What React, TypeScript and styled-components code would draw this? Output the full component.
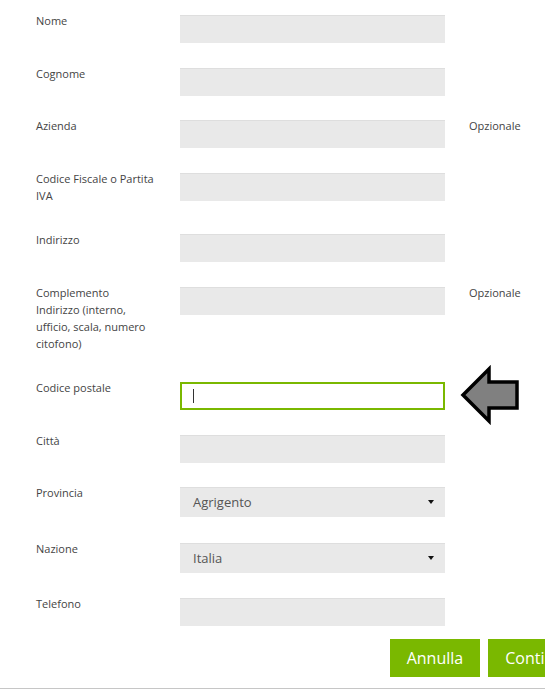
import React from 'react';
import styled, { createGlobalStyle } from 'styled-components';

const GlobalStyle = createGlobalStyle`
  html, body {
    margin: 0;
    padding: 0;
    background: #fff;
    overflow: hidden;
  }
  body {
    font-family: "Open Sans", "Liberation Sans", sans-serif;
  }
`;

const Page = styled.div`
  position: relative;
  width: 590px;
  padding: 12px 0 11px 36px;
  box-sizing: border-box;
  border-bottom: 1px solid #c6c6c6;
`;

const Fields = styled.div`
  display: flex;
  flex-direction: column;
  gap: 21.5px;
`;

const Row = styled.div`
  display: grid;
  grid-template-columns: 144px 265px auto;
  align-items: start;
`;

const Label = styled.div`
  font-size: 11px;
  line-height: 17px;
  color: #444;
  padding-bottom: 6px;
  padding-right: 24px;
  white-space: pre-line;
`;

const Hint = styled.div`
  font-size: 11px;
  line-height: 17px;
  color: #444;
  margin: 0 0 0 24px;
`;

const TextInput = styled.input`
  display: block;
  box-sizing: border-box;
  width: 265px;
  height: 28px;
  margin: 3px 0 0;
  padding: 0 12px;
  border: none;
  outline: none;
  background: #e9e9e9;
  box-shadow: inset 0 1px 0 #dedede;
  font: inherit;
`;

const FocusedInput = styled.div`
  box-sizing: border-box;
  width: 265px;
  height: 28px;
  margin-top: 3px;
  padding: 0 11px;
  border: 2px solid #7ab800;
  background: #fff;
  display: flex;
  align-items: center;
`;

const Caret = styled.span`
  display: block;
  width: 1px;
  height: 14px;
  background: #333;
`;

const Select = styled.div`
  box-sizing: border-box;
  width: 265px;
  height: 30px;
  margin: 3px 0 1px;
  padding: 0 11px 0 13px;
  background: #e9e9e9;
  box-shadow: inset 0 1px 0 #dedede;
  display: flex;
  align-items: center;
  justify-content: space-between;
  font-size: 13px;
  color: #555;
`;

const SelectArrow = styled.span`
  width: 0;
  height: 0;
  border-left: 3.5px solid transparent;
  border-right: 3.5px solid transparent;
  border-top: 4px solid #111;
`;

const Actions = styled.div`
  display: flex;
  justify-content: flex-end;
  gap: 8px;
  margin-top: 13px;
`;

const Button = styled.button`
  height: 38px;
  padding: 0 17px;
  border: none;
  background: #7ab800;
  color: #fff;
  font-family: inherit;
  font-size: 16px;
  cursor: pointer;
`;

const Pointer = styled.svg`
  position: absolute;
  left: 459px;
  top: 365px;
`;

type Field = {
  label: string;
  kind?: 'text' | 'focus' | 'select';
  value?: string;
  optional?: boolean;
};

const fields: Field[] = [
  { label: 'Nome' },
  { label: 'Cognome' },
  { label: 'Azienda', optional: true },
  { label: 'Codice Fiscale o Partita IVA' },
  { label: 'Indirizzo' },
  { label: 'Complemento\nIndirizzo (interno, ufficio, scala, numero citofono)', optional: true },
  { label: 'Codice postale', kind: 'focus' },
  { label: 'Città' },
  { label: 'Provincia', kind: 'select', value: 'Agrigento' },
  { label: 'Nazione', kind: 'select', value: 'Italia' },
  { label: 'Telefono' },
];

const renderControl = (f: Field) => {
  if (f.kind === 'focus') {
    return (
      <FocusedInput>
        <Caret />
      </FocusedInput>
    );
  }
  if (f.kind === 'select') {
    return (
      <Select>
        <span>{f.value}</span>
        <SelectArrow />
      </Select>
    );
  }
  return <TextInput type="text" readOnly />;
};

const App: React.FC = () => {
  return (
    <>
      <GlobalStyle />
      <Page>
        <Fields>
          {fields.map((f) => (
            <Row key={f.label}>
              <Label>{f.label}</Label>
              {renderControl(f)}
              {f.optional ? <Hint>Opzionale</Hint> : <span />}
            </Row>
          ))}
        </Fields>
        <Actions>
          <Button>Annulla</Button>
          <Button>Continua</Button>
        </Actions>
        <Pointer width="62" height="60" viewBox="0 0 62 60">
          <polygon
            points="4,30 30,4 30,17 58,17 58,43 30,43 30,56"
            fill="#808080"
            stroke="#000"
            strokeWidth="3.5"
            strokeLinejoin="miter"
          />
        </Pointer>
      </Page>
    </>
  );
};

export default App;
